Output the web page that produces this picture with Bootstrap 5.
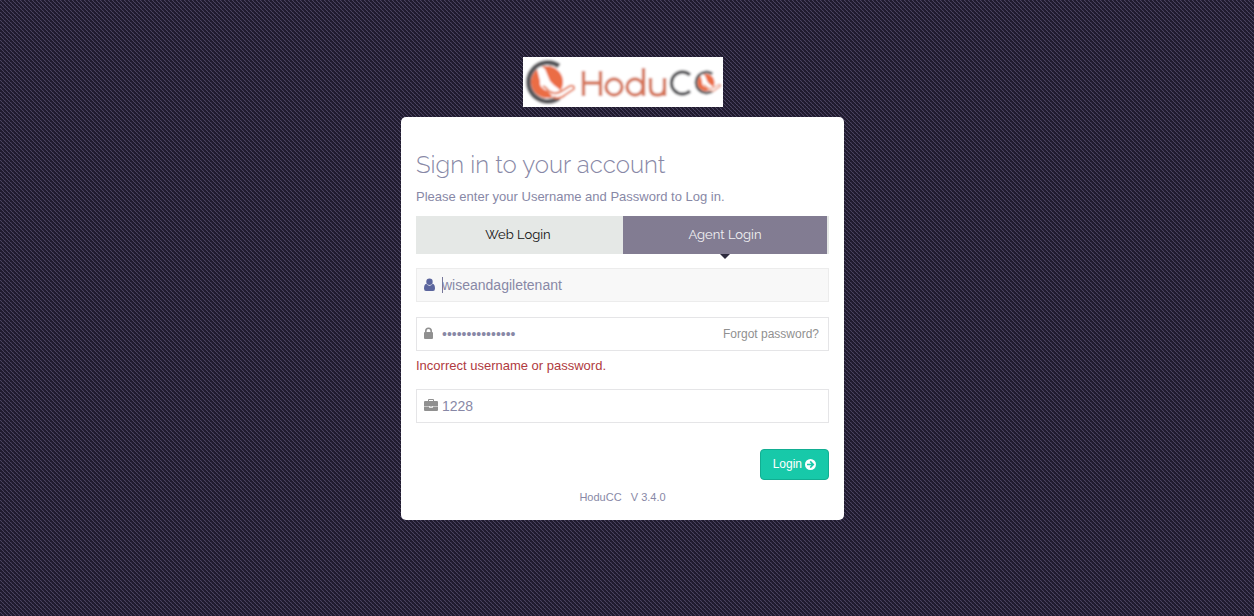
<!DOCTYPE html>
<html lang="en">
<head>
<meta charset="utf-8">
<meta name="viewport" content="width=device-width, initial-scale=1">
<title>HoduCC - Login</title>
<link href="https://cdn.jsdelivr.net/npm/bootstrap@5.3.0/dist/css/bootstrap.min.css" rel="stylesheet">
<style>
  body {
    font: 13px/20px "Liberation Sans", Arial, sans-serif;
    color: #8888a6;
    background: #201b2f url("data:image/svg+xml,%3Csvg xmlns='http://www.w3.org/2000/svg' width='4' height='4' shape-rendering='crispEdges'%3E%3Cpath fill='%234a435e' d='M0 0h1v1H0zM1 1h1v1H1zM2 2h1v1H2zM3 3h1v1H3z'/%3E%3Cpath fill='%232c2640' d='M1 0h1v1H1zM3 2h1v1H3z'/%3E%3C/svg%3E");
  }
  .login-main { padding: 57px 9px 16px 0; }
  .login-col { max-width: 443px; }
  .brand-logo { width: 200px; height: 50px; background: #fff; margin-bottom: 10px; }
  .login-box { background: #fff; border-radius: 5px; padding: 31px 15px 15px; }
  .login-title { font: 300 24px/34px Raleway, Lato, sans-serif; margin-bottom: 5px; }
  .login-tabs { background: #e5e8e6; height: 38px; margin: 9px 0 14px; padding-right: 2px; }
  .login-tabs .nav-item:first-child { padding-right: 3px; }
  .login-tabs .nav-link { font: 13px/22px Raleway, Lato, sans-serif; color: #111; padding: 8px; border-radius: 0; position: relative; }
  .login-tabs .nav-link.active { background: #827c92; color: #f1f1f3; }
  .login-tabs .nav-link.active::after {
    content: ""; position: absolute; top: 100%; left: 50%; margin-left: -5px;
    border: 5px solid transparent; border-top-color: #2d2a3d; border-bottom: 0;
  }
  .field { position: relative; }
  .field-user { margin-bottom: 15px; }
  .field .form-control {
    height: 34px; padding: 5px 8px 5px 25px; font-size: 14px; line-height: 20px;
    color: #8888a6; background: #fff; border: 1px solid #e5e5e7; border-radius: 0; box-shadow: none;
  }
  .field .form-control.current { background: #f8f8f8; border-color: #ececec; }
  .field svg { position: absolute; left: 8px; top: 10px; fill: #909090; }
  .field .current + svg { fill: #5b659d; }
  .caret-line::after { content: ""; position: absolute; left: 26px; top: 9px; width: 1px; height: 16px; background: #77779a; }
  .forgot { position: absolute; right: 10px; top: 7px; font-size: 12px; color: #909090; text-decoration: none; }
  .error-text { color: #b03a40; margin: 5px 0 13px; }
  .login-actions { margin-top: 26px; }
  .btn-login {
    --bs-btn-color: #fff; --bs-btn-bg: #17c9a9; --bs-btn-border-color: #12ae92;
    --bs-btn-hover-color: #fff; --bs-btn-hover-bg: #14b497; --bs-btn-hover-border-color: #12ae92;
    height: 31px; padding: 0 12px 1px; gap: 3px; font-size: 12px; line-height: 18px; border-radius: 4px;
  }
  .version { font-size: 11px; line-height: 16px; margin-top: 9px; }
</style>
</head>
<body>
<main class="login-main">
  <div class="login-col mx-auto">
    <div class="brand-logo mx-auto">
      <svg width="200" height="50" viewBox="0 0 200 50" role="img" aria-label="HoduCC">
        <defs>
          <filter id="soft" x="0" y="0" width="1" height="1"><feGaussianBlur stdDeviation=".8"/></filter>
          <g id="emblem">
            <circle cx="24" cy="25" r="16" fill="#eb6d45"/>
            <path d="M36 9A19.500 19.500 0 1 0 36 41" fill="none" stroke="#59585b" stroke-width="5"/>
            <path d="M14 12q4-4 8 0l5 12q3 4 9 8l3 5-17-4q-6-3-5-9z" fill="#fff"/>
            <path d="M20 29q3 1 6 5 5 4 11 1l10-6q5-1 4 3l-9 6q-5 5-12 2" fill="#fff" stroke="#e67c58" stroke-width="2"/>
          </g>
        </defs>
        <g filter="url(#soft)">
          <path fill="#fff" d="M0 0h200v50H0z"/>
          <use href="#emblem"/>
          <g fill="none" stroke="#d5775b" stroke-width="3.400">
            <path d="M60.500 14v25M77.500 14v25M60.500 26h17"/>
            <circle cx="91" cy="30" r="8"/>
            <circle cx="112" cy="30" r="8"/><path d="M120.500 11v28"/>
            <path d="M127.500 21v10q0 7 7 7t7-7V21M141.500 30v9"/>
          </g>
          <path d="M167 18a11 11 0 1 0 0 16" fill="none" stroke="#58585b" stroke-width="3.400"/>
          <use href="#emblem" transform="translate(170 12) scale(.54)"/>
        </g>
      </svg>
    </div>

    <form class="login-box" onsubmit="return false">
      <h1 class="login-title">Sign in to your account</h1>
      <p class="mb-0">Please enter your Username and Password to Log in.</p>
      <ul class="nav nav-justified login-tabs">
        <li class="nav-item"><a class="nav-link" href="#web">Web Login</a></li>
        <li class="nav-item"><a class="nav-link active" href="#agent" aria-current="page">Agent Login</a></li>
      </ul>

      <div class="field field-user caret-line">
        <input class="form-control current" type="text" value="wiseandagiletenant" aria-label="Username">
        <svg width="11" height="13" viewBox="0 0 11 13"><circle cx="5.500" cy="3.800" r="3.200"/><path d="M2.300 5.800Q5.500 9.500 8.700 5.800 11 6.500 11 10.500q0 2.500-2 2.500H2q-2 0-2-2.500 0-4 2.300-4.700z"/></svg>
      </div>
      <div class="field">
        <input class="form-control" type="password" value="wiseandagile123" aria-label="Password">
        <svg width="9" height="12" viewBox="0 0 9 12"><path d="M0 6q0-1 1-1V4a3.500 3.500 0 0 1 7 0v1q1 0 1 1v5q0 1-1 1H1q-1 0-1-1zM2.600 5h3.800V4a1.900 1.900 0 0 0-3.800 0z"/></svg>
        <a class="forgot" href="#forgot">Forgot password?</a>
      </div>
      <p class="error-text">Incorrect username or password.</p>
      <div class="field">
        <input class="form-control" type="text" value="1228" aria-label="Extension">
        <svg width="14" height="12" viewBox="0 0 14 12"><path d="M4 2V1q0-1 1-1h4q1 0 1 1v1h3q1 0 1 1v4H0V3q0-1 1-1zM5 2h4V1H5zM0 7.600h5.300v.900q0 .6.600.600h2.200q.6 0 .6-.6v-.900H14V11q0 1-1 1H1q-1 0-1-1zM6 7.400h2v.900H6z" fill-rule="evenodd"/></svg>
      </div>
      <div class="login-actions d-flex justify-content-end">
        <button class="btn btn-login d-flex align-items-center" type="submit">Login
          <svg width="11" height="11" viewBox="0 0 11 11"><circle cx="5.500" cy="5.500" r="5.500" fill="#fff"/><path d="M2 5.500h6M5.200 2.400l3.100 3.100-3.100 3.100" fill="none" stroke="#17c9a9" stroke-width="1.600"/></svg>
        </button>
      </div>
      <div class="version text-center">HoduCC &nbsp; V 3.4.0</div>
    </form>
  </div>
</main>
<script src="https://cdn.jsdelivr.net/npm/bootstrap@5.3.0/dist/js/bootstrap.bundle.min.js"></script>
</body>
</html>
